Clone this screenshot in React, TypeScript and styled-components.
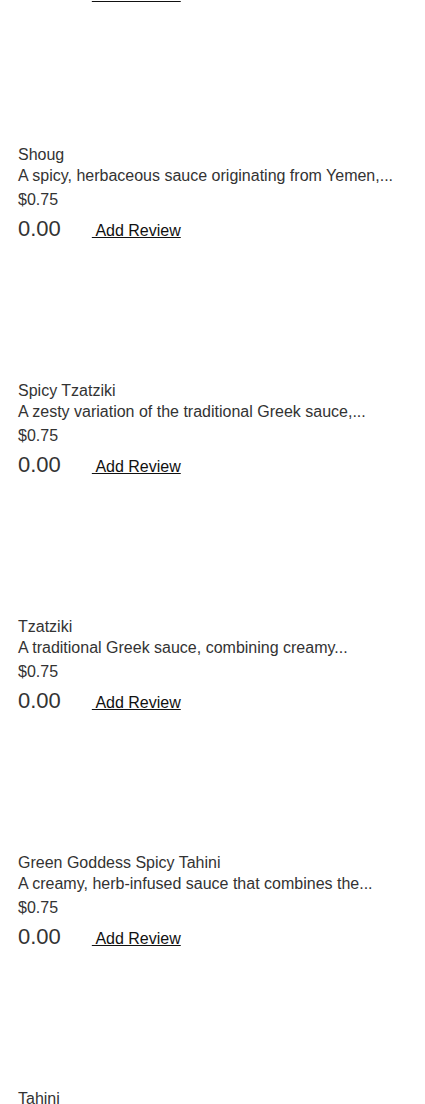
import React from "react";
import styled, { createGlobalStyle } from "styled-components";

const GlobalStyle = createGlobalStyle`
  html, body { margin: 0; padding: 0; background: #fff; }
  body { font-family: "Liberation Sans", Arial, sans-serif; color: #333; overflow: hidden; }
`;

const Page = styled.main`
  padding: 0 18px;
`;

const List = styled.div`
  display: flex;
  flex-direction: column;
  margin-top: -229px;
`;

const Card = styled.article`
  display: flex;
  flex-direction: column;
  height: 236px;
`;

const ImageBox = styled.div`
  height: 137px;
  flex: none;
`;

const Title = styled.div`
  font-size: 16px;
  line-height: 21px;
  color: #333;
`;

const Description = styled.div`
  font-size: 16px;
  line-height: 21px;
  color: #333;
  white-space: nowrap;
`;

const Price = styled.div`
  font-size: 16px;
  line-height: 21px;
  margin-top: 3px;
  color: #333;
`;

const RatingRow = styled.div`
  display: flex;
  align-items: baseline;
  gap: 31px;
  margin-top: 4px;
  line-height: 30px;
`;

const Rating = styled.span`
  font-size: 22px;
  color: #333;
`;

const ReviewLink = styled.a`
  font-size: 16px;
  color: #111;
  text-decoration: underline;
  white-space: pre;
  cursor: pointer;
`;

const items = [
  { name: "Amba", desc: "A tangy mango pickle sauce with fenugreek,...", price: "$0.75" },
  { name: "Shoug", desc: "A spicy, herbaceous sauce originating from Yemen,...", price: "$0.75" },
  { name: "Spicy Tzatziki", desc: "A zesty variation of the traditional Greek sauce,...", price: "$0.75" },
  { name: "Tzatziki", desc: "A traditional Greek sauce, combining creamy...", price: "$0.75" },
  { name: "Green Goddess Spicy Tahini", desc: "A creamy, herb-infused sauce that combines the...", price: "$0.75" },
  { name: "Tahini", desc: "A smooth, nutty sauce made from ground sesame...", price: "$0.75" },
];

export default function App() {
  return (
    <>
      <GlobalStyle />
      <Page>
        <List>
          {items.map((it) => (
            <Card key={it.name}>
              <ImageBox />
              <Title>{it.name}</Title>
              <Description>{it.desc}</Description>
              <Price>{it.price}</Price>
              <RatingRow>
                <Rating>0.00</Rating>
                <ReviewLink>{" Add Review"}</ReviewLink>
              </RatingRow>
            </Card>
          ))}
        </List>
      </Page>
    </>
  );
}
